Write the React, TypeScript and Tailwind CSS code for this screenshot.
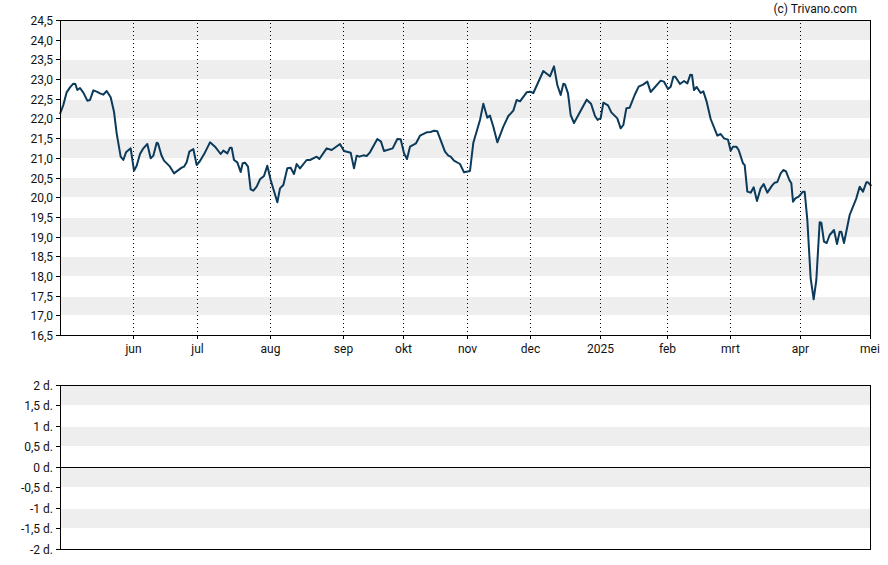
// Price chart and lower panel, traced from the picture
const z = (ox: number, oy: number, pts: number[][]) =>
  pts.map(([x, y]) => [ox + x / 3, oy + y / 3]);

const line = [
  ...z(0, 0, [[180,342],[190,315],[200,277],[210,262],[220,251],[226,252],[232,270],[240,264],[250,278],[262,302],[270,300],[280,271],[290,275],[300,280],[310,284],[320,273],[332,292],[342,335],[350,400],[362,470],[370,480],[378,457],[392,445],[402,512],[410,497],[420,462],[430,445],[442,432],[452,475],[460,467],[470,428],[474,430],[484,465],[492,482],[510,500],[522,520],[545,503],[552,500],[560,487],[568,455],[580,447],[590,495],[600,483],[612,463],[630,427],[645,440],[662,462],[670,452],[682,460],[690,443],[695,443],[702,480],[712,487],[722,516],[728,490],[735,488],[744,500]]),
  ...z(0, 170, [[752,58],[760,62],[770,50],[780,28],[792,18],[802,-13],[812,30],[832,97],[840,55],[850,45],[862,-5],[872,-7],[882,12],[890,-18],[900,-5]]),
  ...z(300, 0, [[20,480],[30,480],[50,470],[58,477],[80,445],[95,450],[120,432],[132,453],[152,458],[162,505],[170,467],[178,470],[190,466],[200,468],[210,457],[232,417],[243,425],[252,453],[278,445],[292,417],[302,418],[312,460],[321,477],[330,440],[348,430],[360,407],[380,397],[392,396],[402,392],[412,394],[435,455],[445,467],[452,470],[462,482],[480,492],[492,517],[510,513],[520,428],[540,360],[550,311],[562,353],[570,347],[580,380],[592,427],[610,380],[625,348],[640,332],[650,300],[660,304],[680,277],[690,275],[700,279],[730,213],[750,229],[762,199],[772,255],[782,285],[790,251],[795,253],[804,280],[812,345],[822,369],[860,299],[873,311],[885,348],[893,360]]),
  ...z(588, 0, [[30,358],[38,355],[46,308],[60,316],[70,337],[88,355],[98,385],[106,375],[115,325],[125,323],[140,285],[152,260],[165,254],[178,245],[188,276],[218,242],[228,245],[240,267],[248,260],[256,230],[262,230],[276,252],[288,243],[298,250],[307,224],[312,225],[318,270],[326,261],[338,279],[346,274],[356,305],[368,357],[388,407],[398,402],[408,415],[420,419],[428,452],[435,440],[445,440],[452,450],[465,490],[470,495]]),
  ...z(588, 170, [[478,65],[488,68],[497,52],[507,93],[518,55],[527,42],[538,68],[552,47],[560,38],[568,36],[578,10],[586,0],[594,4],[604,30],[610,40],[615,95],[622,85],[632,80],[645,65],[650,65],[658,150],[668,325],[677,388],[685,330],[695,157],[700,158],[708,215],[716,219],[725,195],[738,180],[747,222],[755,185],[760,185],[768,219],[785,135],[805,85],[815,50],[825,65],[835,37],[840,37],[850,48]]),
];

const priceLabels = ["24,5", "24,0", "23,5", "23,0", "22,5", "22,0", "21,5", "21,0", "20,5", "20,0", "19,5", "19,0", "18,5", "18,0", "17,5", "17,0", "16,5"];
const priceBands = [[20, 40], [60, 79], [100, 118], [139, 158], [178, 197], [218, 237], [257, 276], [297, 315]];
const months = [
  { x: 133.5, label: "jun" },
  { x: 197.5, label: "jul" },
  { x: 270.5, label: "aug" },
  { x: 343.5, label: "sep" },
  { x: 403.5, label: "okt" },
  { x: 467.5, label: "nov" },
  { x: 530.5, label: "dec" },
  { x: 600.5, label: "2025" },
  { x: 667.5, label: "feb" },
  { x: 730.5, label: "mrt" },
  { x: 800.5, label: "apr" },
];

const dayLabels = ["2 d.", "1,5 d.", "1 d.", "0,5 d.", "0 d.", "-0,5 d.", "-1 d.", "-1,5 d.", "-2 d."];
const dayTicks = [385.5, 405.5, 426.5, 446.5, 467.5, 487.5, 508.5, 528.5, 549.5];
const dayBands = [[385, 405], [427, 446], [467, 487], [509, 528]];

const App = () => {
  return (
    <div className="w-[888px] h-[565px] overflow-hidden bg-white">
      <svg width="888" height="565" className="block font-['Roboto',sans-serif] text-[12px]">
        <text x="857" y="13" textAnchor="end" fill="#111">(c) Trivano.com</text>

        {/* Price panel */}
        {priceBands.map(([a, b]) => (
          <rect key={a} x="60" y={a} width="810" height={b - a} fill="#eeeeee" />
        ))}
        {months.map(m => (
          <g key={m.label}>
            <line x1={m.x} x2={m.x} y1="23" y2="335" stroke="#000" strokeDasharray="1 3" />
            <line x1={m.x} x2={m.x} y1="335" y2="339" stroke="#000" />
            <text x={m.x} y="353" textAnchor="middle" fill="#111">{m.label}</text>
          </g>
        ))}
        <line x1="870.5" x2="870.5" y1="335" y2="339" stroke="#000" />
        <text x="870" y="353" textAnchor="middle" fill="#111">mei</text>
        {priceLabels.map((label, i) => {
          const y = Math.round(20 + i * 19.69) + 0.5;
          return (
            <g key={label}>
              <line x1="56" x2="60" y1={y} y2={y} stroke="#000" />
              <text x="53" y={y + 4} textAnchor="end" fill="#111">{label}</text>
            </g>
          );
        })}
        <polyline
          points={line.map(p => p.join(",")).join(" ")}
          fill="none"
          stroke="#0b3a5a"
          strokeWidth="2"
          strokeLinejoin="round"
        />
        <rect x="60.5" y="20.5" width="810" height="315" fill="none" stroke="#000" />

        {/* Lower panel */}
        {dayBands.map(([a, b]) => (
          <rect key={a} x="60" y={a} width="810" height={b - a} fill="#eeeeee" />
        ))}
        {dayLabels.map((label, i) => (
          <g key={label}>
            <line x1="56" x2="60" y1={dayTicks[i]} y2={dayTicks[i]} stroke="#000" />
            <text x="53" y={dayTicks[i] + 4} textAnchor="end" fill="#111">{label}</text>
          </g>
        ))}
        <line x1="60" x2="870" y1="467.5" y2="467.5" stroke="#000" />
        <rect x="60.5" y="385.5" width="810" height="164" fill="none" stroke="#000" />
      </svg>
    </div>
  );
};

export default App;
